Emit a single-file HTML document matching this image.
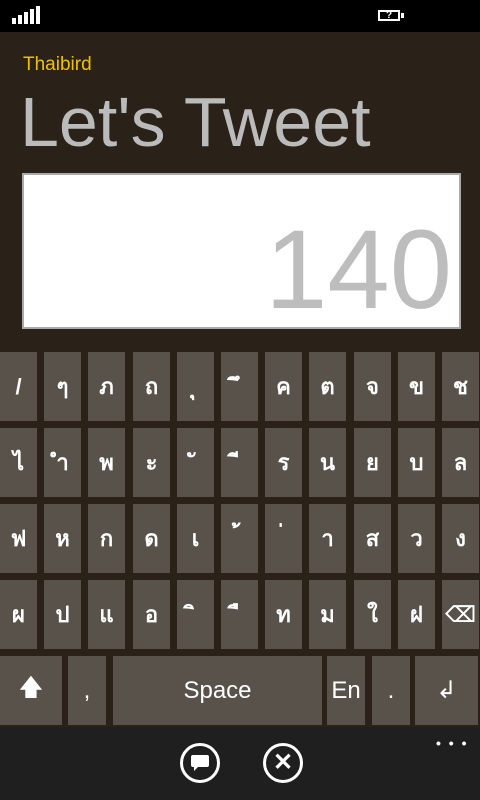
<!DOCTYPE html>
<html><head><style>
html,body{margin:0;width:480px;height:800px;overflow:hidden}
body{background:#2a2118;font-family:"Liberation Sans","Noto Sans CJK SC",sans-serif;position:relative}
.sb{position:absolute;left:0;top:0;width:480px;height:32px;background:#000}
.k{position:absolute;background:#58524b;color:#fff;font-size:22px;font-weight:bold;display:flex;align-items:center;justify-content:center;font-family:"Liberation Sans","DejaVu Sans",sans-serif}
.ab{position:absolute;left:0;top:727px;width:480px;height:73px;background:#1f1f1f}
.c{position:absolute;top:16px;width:40px;height:40px;border:3px solid #fff;border-radius:50%;box-sizing:border-box}
</style></head><body>
<div class="sb">
<div style="position:absolute;left:12px;top:18px;width:4px;height:6px;background:#fff"></div>
<div style="position:absolute;left:18px;top:15px;width:4px;height:9px;background:#fff"></div>
<div style="position:absolute;left:24px;top:12px;width:4px;height:12px;background:#fff"></div>
<div style="position:absolute;left:30px;top:9px;width:4px;height:15px;background:#fff"></div>
<div style="position:absolute;left:36px;top:6px;width:4px;height:18px;background:#fff"></div>
<div style="position:absolute;left:378px;top:10px;width:22px;height:11px;border:2px solid #fff;box-sizing:border-box;color:#fff;font-size:10px;font-weight:bold;line-height:8px;text-align:center">?</div>
<div style="position:absolute;left:401px;top:13px;width:3px;height:5px;background:#fff"></div>
</div>
<div style="position:absolute;left:23px;top:54px;color:#f0c000;font-size:19px">Thaibird</div>
<div style="position:absolute;left:20px;top:82px;color:#bbb;font-size:70px;letter-spacing:0px">Let's Tweet</div>
<div style="position:absolute;left:22px;top:173px;width:439px;height:156px;background:#fff;border:2px solid #aaa;box-sizing:border-box"></div>
<div style="position:absolute;right:28px;top:214px;color:#bdbdbd;font-size:112px;line-height:112px">140</div>
<div id="kb"></div>
<div class="ab">
<div class="c" style="left:180px"><div style="position:absolute;left:8px;top:9px;width:18px;height:12px;background:#fff;border-radius:2px"></div><div style="position:absolute;left:11px;top:20px;width:0;height:0;border-left:5px solid #fff;border-bottom:5px solid transparent"></div></div>
<div class="c" style="left:263px;color:#fff;font-size:24px;font-weight:bold;line-height:34px;text-align:center">✕</div>
<div style="position:absolute;left:436px;top:8px;color:#fff;font-size:14px;letter-spacing:2px;font-weight:bold">• • •</div>
</div>
<script>
var rows=[["/","ๆ","ภ","ถ","ุ","ึ","ค","ต","จ","ข","ช"],["ไ","ำ","พ","ะ","ั","ี","ร","น","ย","บ","ล"],["ฟ","ห","ก","ด","เ","้","่","า","ส","ว","ง"],["ผ","ป","แ","อ","ิ","ื","ท","ม","ใ","ฝ","⌫"]];
var h="",ys=[352,428,504,580];
rows.forEach(function(r,ri){r.forEach(function(c,i){h+='<div class="k" style="left:'+Math.round(i*44.2)+'px;top:'+ys[ri]+'px;width:37px;height:69px">'+c+'</div>'})});
[[0,62,"🡅"],[68,38,","],[113,209,"Space"],[327,38,"En"],[372,38,"."],[415,63,"↲"]].forEach(function(k){h+='<div class="k" style="left:'+k[0]+'px;top:656px;width:'+k[1]+'px;height:69px;font-weight:normal;font-size:24px">'+k[2]+'</div>'});
document.getElementById("kb").innerHTML=h;
</script>
</body></html>
